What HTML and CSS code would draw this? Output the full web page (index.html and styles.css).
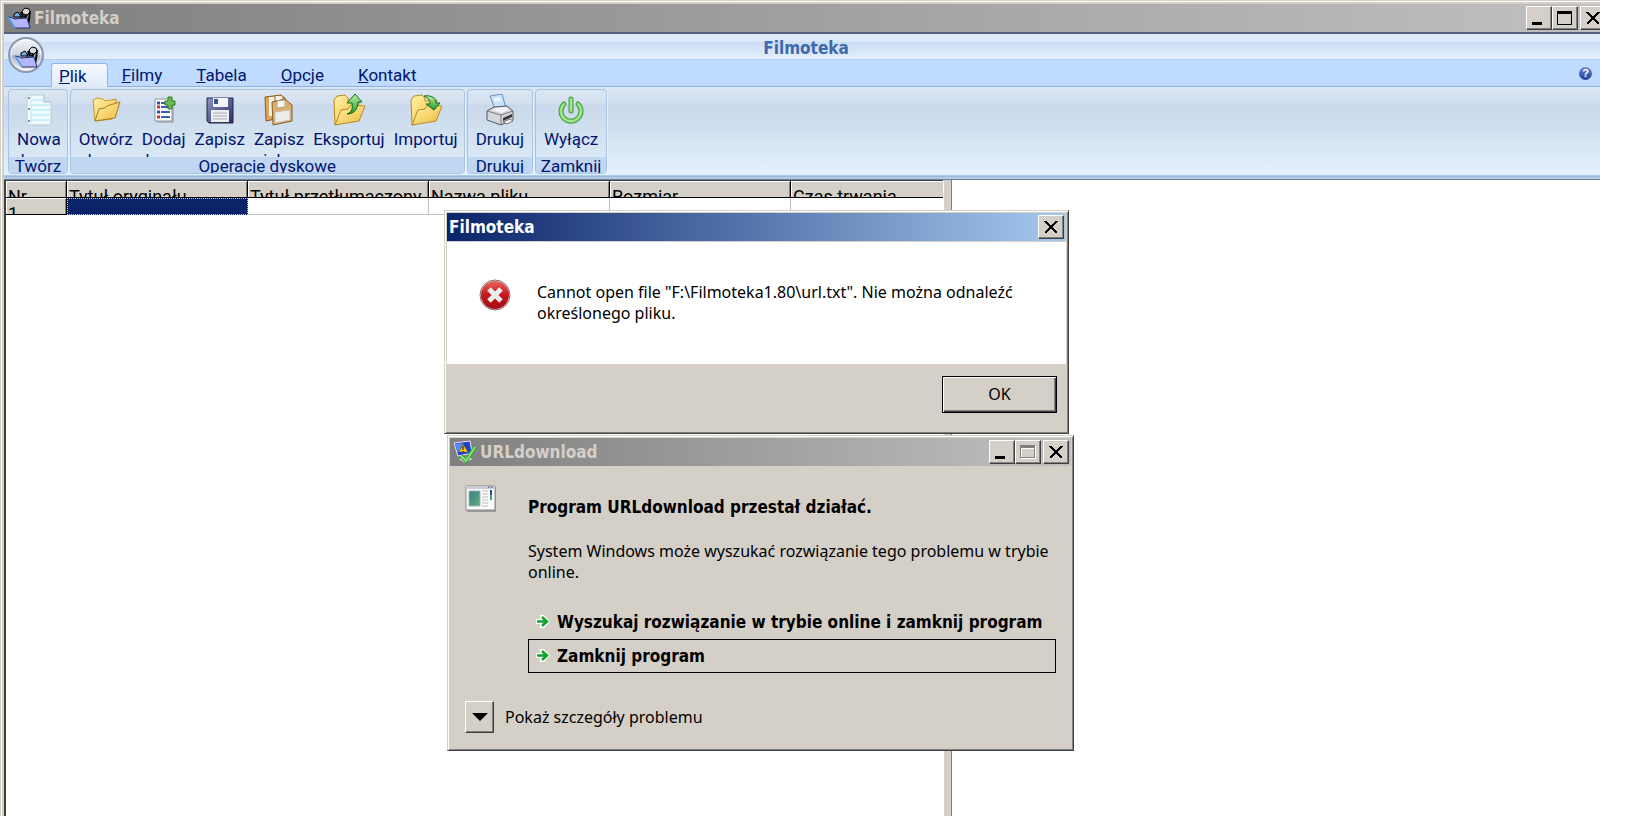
FILE: index.html
```html
<!DOCTYPE html>
<html lang="pl">
<head>
  <meta charset="UTF-8" />
  <title>Filmoteka</title>
  <link rel="stylesheet" href="styles.css">
</head>
<body>
  <!-- Shared shapes -->
  <svg class="defs" width="0" height="0" aria-hidden="true">
    <defs>
      <linearGradient id="folderGrad" x1="0" y1="0" x2="1" y2="1">
        <stop offset="0" stop-color="#fff3a8" /><stop offset="1" stop-color="#efb93c" />
      </linearGradient>
      <linearGradient id="greenGrad" x1="0" y1="0" x2="0" y2="1">
        <stop offset="0" stop-color="#b8f0a0" /><stop offset="1" stop-color="#1e9a2c" />
      </linearGradient>
      <linearGradient id="diskGrad" x1="0" y1="0" x2="1" y2="1">
        <stop offset="0" stop-color="#8d93c4" /><stop offset="1" stop-color="#2b2f5e" />
      </linearGradient>
      <linearGradient id="orbGrad" x1="0" y1="0" x2="0" y2="1">
        <stop offset="0" stop-color="#f4f6fa" /><stop offset="0.5" stop-color="#cdd5e2" />
        <stop offset="0.52" stop-color="#a9b4c9" /><stop offset="1" stop-color="#f2f5fb" />
      </linearGradient>
      <linearGradient id="redGrad" x1="0" y1="0" x2="0" y2="1">
        <stop offset="0" stop-color="#e8685f" /><stop offset="0.5" stop-color="#c4161c" />
        <stop offset="1" stop-color="#a30d12" />
      </linearGradient>
      <linearGradient id="screenGrad" x1="0" y1="0" x2="1" y2="1">
        <stop offset="0" stop-color="#3b7f8c" /><stop offset="1" stop-color="#5fae7b" />
      </linearGradient>
      <symbol id="film" viewBox="0 0 24 22">
        <path d="M7 10V7l4-2 3 5zM13 10l2-5 3 5z" fill="#6fb2ea" stroke="#000" />
        <path d="M14 5l2 5M20 7l-2 4M23 4l-1 9-1 4" fill="none" stroke="#000" stroke-width="2" />
        <path d="M15 4l3-3 4 1 1 3-3 3-4-1z" class="reel" stroke="#000" />
        <path d="M1 10l5 1 1 1 13-1 3 10H8z" fill="#b4b6fb" stroke="#2a2f6e" />
        <path d="M1 10l7 11" stroke="#4aa7e8" stroke-width="1.500" />
      </symbol>
      <symbol id="folderBig" viewBox="0 0 32 32">
        <path d="M1 6l3-4 8-1 3 3v3l12-1-6 20L2 31z" fill="url(#folderGrad)" stroke="#b98a1e" />
        <path d="M2 31l6-15 7-1 3-4 14 1-6 15z" fill="url(#folderGrad)" stroke="#b98a1e" />
      </symbol>
      <symbol id="go" viewBox="0 0 14 14">
        <path d="M0 4h4V0h4l6 6.500L8 13H4V9H0z" fill="#fff" />
        <path d="M1 6.500h10M6 2l5 4.500L6 11" fill="none" stroke="#10a32e" stroke-width="2.500" />
      </symbol>
      <symbol id="cross" viewBox="0 0 14 12">
        <path d="M1 0l12 12M13 0L1 12" stroke="#000" stroke-width="2" shape-rendering="crispEdges" />
      </symbol>
    </defs>
  </svg>

  <main class="app">
    <header class="titlebar inactive">
      <svg class="title-icon" width="24" height="22"><use href="#film" /></svg>
      <h1 class="title-text">Filmoteka</h1>
      <div class="title-buttons">
        <button class="box-btn" aria-label="Minimalizuj"><svg width="16" height="14"><path d="M1 11h10v3H1z" /></svg></button>
        <button class="box-btn" aria-label="Maksymalizuj"><svg width="16" height="14"><path d="M0 0h15v14H0zM1 3v10h13V3z" fill-rule="evenodd" /></svg></button>
        <button class="box-btn close" aria-label="Zamknij"><svg width="14" height="12"><use href="#cross" /></svg></button>
      </div>
    </header>

    <div class="ribbon">
      <div class="ribbon-caption">Filmoteka</div>
      <button class="orb" aria-label="Menu">
        <svg width="38" height="38" viewBox="0 0 38 38">
          <circle cx="19" cy="19" r="17" fill="url(#orbGrad)" stroke="#8b98ae" stroke-width="2" />
          <circle cx="19" cy="19" r="15" fill="none" stroke="#fff" stroke-opacity="0.600" />
          <use href="#film" x="7" y="10" width="24" height="22" />
        </svg>
      </button>
      <nav class="tabs">
        <a class="tab active" href="#plik"><u>P</u>lik</a>
        <a class="tab" href="#filmy"><u>F</u>ilmy</a>
        <a class="tab" href="#tabela"><u>T</u>abela</a>
        <a class="tab" href="#opcje"><u>O</u>pcje</a>
        <a class="tab" href="#kontakt"><u>K</u>ontakt</a>
        <button class="help" aria-label="Pomoc">?</button>
      </nav>

      <div class="panel" id="plik">
        <section class="group">
          <div class="tools">
            <button class="tool">
              <svg width="32" height="32" viewBox="0 0 32 32">
                <path d="M4 1h17l7 7v23H4z" fill="#eefafd" stroke="#b9ccd6" />
                <path d="M21 1v7h7" fill="#d3e6ee" stroke="#a9bcc8" />
                <path d="M8 6h12M8 11h19M8 16h19M8 21h19M8 26h19" stroke="#a5e6f1" />
                <path d="M8 1v30" stroke="#cfe3ea" />
                <path d="M5 4h2M5 15h2M5 27h2" stroke="#7d8f9a" stroke-width="2" />
              </svg>
              <span>Nowa baza</span>
            </button>
          </div>
          <h2 class="group-name">Twórz</h2>
        </section>
        <section class="group">
          <div class="tools">
            <button class="tool">
              <svg width="32" height="32" viewBox="0 0 32 32">
                <path d="M3 6l4-2 6 1 2 2 11-2v7l-4 13-17 2z" fill="url(#folderGrad)" stroke="#c39a2c" />
                <path d="M5 27l4-12 6-1 2-2 13-4-5 16z" fill="url(#folderGrad)" stroke="#a87d1c" />
              </svg>
              <span>Otwórz bazę</span>
            </button>
            <button class="tool">
              <svg width="32" height="32" viewBox="0 0 32 32">
                <path d="M7 5h17v22H7z" fill="#fff" stroke="#8b8fa5" />
                <path d="M24 8l1 1v19H9" fill="none" stroke="#9c8f80" />
                <path d="M9 9h3M9 18h3" stroke="#2b55a8" stroke-width="3" />
                <path d="M9 13h3M9 23h3" stroke="#c0392b" stroke-width="3" />
                <path d="M13 9h5M13 13h9M13 18h9M13 23h9" stroke="#3a5fb0" stroke-width="2" />
                <path d="M17 7h3V3h4v4h3v4h-3v4h-4v-4h-3z" fill="#6dbb4e" stroke="#2f7a2a" />
              </svg>
              <span>Dodaj bazę</span>
            </button>
            <button class="tool">
              <svg width="32" height="32" viewBox="0 0 32 32">
                <path d="M3 4h26v25H5l-2-2z" fill="url(#diskGrad)" stroke="#1f2450" />
                <path d="M9 4h15v9H9z" fill="#f2f4f8" /><path d="M10 5h4v5h-4z" fill="#33588c" />
                <path d="M7 16h18v12H7z" fill="#eceef2" />
                <path d="M9 19h14M9 22h14M9 25h14" stroke="#a7acb8" />
              </svg>
              <span>Zapisz</span>
            </button>
            <button class="tool">
              <svg width="32" height="32" viewBox="0 0 32 32">
                <path d="M2 3l16-2 4 3v19L3 27z" fill="#d9a65c" stroke="#8a5d20" />
                <path d="M6 3h5v19H6zM13 2h6v7h-6z" fill="#f0f0ee" />
                <path d="M9 8l13-3 7 6v16L10 31z" fill="#dcae6c" stroke="#8a5d20" />
                <path d="M14 7l8-1v7l-8 1z" fill="#f5f5f5" stroke="#b5a58c" />
                <path d="M12 18l15-2v10l-15 3z" fill="#ececec" stroke="#c9beac" />
              </svg>
              <span>Zapisz jako</span>
            </button>
            <button class="tool">
              <svg width="32" height="32" viewBox="0 0 32 32">
                <use href="#folderBig" />
                <path d="M14 20c5-2 6-6 5-11h-5l8-9 7 8h-4c0 6-3 12-11 12z" fill="url(#greenGrad)" stroke="#14691f" />
              </svg>
              <span>Eksportuj</span>
            </button>
            <button class="tool">
              <svg width="32" height="32" viewBox="0 0 32 32">
                <use href="#folderBig" />
                <path d="M14 2c8-1 12 2 12 7h4l-6 7-8-6h4c0-4-2-6-6-8z" fill="url(#greenGrad)" stroke="#14691f" />
              </svg>
              <span>Importuj</span>
            </button>
          </div>
          <h2 class="group-name">Operacje dyskowe</h2>
        </section>
        <section class="group single">
          <div class="tools">
            <button class="tool">
              <svg width="32" height="32" viewBox="0 0 32 32">
                <path d="M6 2l12-2 4 14-11 1z" fill="#c5e2fb" stroke="#6f8fb8" />
                <path d="M9 4l7-1 1 4-6 1z" fill="#eaf5ff" />
                <path d="M3 17l7-4 13-1 6 5v9l-12 5L3 26z" fill="#d5d6da" stroke="#55585f" />
                <path d="M3 17l14 4 12-4M17 21v10" fill="none" stroke="#77797f" />
                <path d="M8 16l4-2 10-1 3 3-8 3z" fill="#f3f3f5" />
                <path d="M19 24l9-4v3l-9 4z" fill="#33363c" />
                <path d="M19 28l4 2 6-3-3-2z" fill="#f4f4f4" stroke="#777" />
              </svg>
              <span>Drukuj</span>
            </button>
          </div>
          <h2 class="group-name">Drukuj</h2>
        </section>
        <section class="group single">
          <div class="tools">
            <button class="tool">
              <svg width="32" height="32" viewBox="0 0 32 32" fill="none" stroke-linecap="round">
                <path d="M9 10a10 10 0 1 0 14 0M16 5v12" stroke="#3f9c3c" stroke-width="5" />
                <path d="M9 10a10 10 0 1 0 14 0M16 5v12" stroke="#8edb78" stroke-width="3" />
                <path d="M9 10a10 10 0 1 0 14 0M16 5v12" stroke="#b8eaa6" stroke-width="1" />
              </svg>
              <span>Wyłącz</span>
            </button>
          </div>
          <h2 class="group-name">Zamknij</h2>
        </section>
      </div>
    </div>

    <div class="content">
      <div class="grid-pane">
        <table class="grid">
          <colgroup><col class="col-nr"><col class="col"><col class="col"><col class="col"><col class="col"><col></colgroup>
          <thead>
            <tr>
              <th><div>Nr</div></th>
              <th><div>Tytuł oryginału</div></th>
              <th><div>Tytuł przetłumaczony</div></th>
              <th><div>Nazwa pliku</div></th>
              <th><div>Rozmiar</div></th>
              <th><div>Czas trwania</div></th>
            </tr>
          </thead>
          <tbody>
            <tr>
              <th><div>1</div></th>
              <td class="selected"></td>
              <td></td>
              <td></td>
              <td></td>
              <td></td>
            </tr>
          </tbody>
        </table>
      </div>
      <div class="splitter"></div>
      <div class="preview"></div>
    </div>
  </main>

  <!-- Error message -->
  <section class="window error-window" role="alertdialog" aria-labelledby="errorTitle">
    <header class="titlebar">
      <h2 class="title-text" id="errorTitle">Filmoteka</h2>
      <div class="title-buttons">
        <button class="box-btn close" aria-label="Zamknij"><svg width="14" height="12"><use href="#cross" /></svg></button>
      </div>
    </header>
    <div class="error-body">
      <svg width="32" height="32" viewBox="0 0 32 32">
        <circle cx="16" cy="16" r="15" fill="#f0eded" stroke="#8a6a6a" />
        <circle cx="16" cy="16" r="14" fill="url(#redGrad)" />
        <path d="M10 10l12 12M22 10L10 22" stroke="#ececec" stroke-width="5" />
      </svg>
      <p>Cannot open file "F:\Filmoteka1.80\url.txt". Nie można odnaleźć określonego pliku.</p>
    </div>
    <footer class="error-footer">
      <button class="ok-btn">OK</button>
    </footer>
  </section>

  <!-- Crash report -->
  <section class="window crash-window" role="dialog" aria-labelledby="crashTitle">
    <header class="titlebar inactive">
      <svg class="title-icon" width="24" height="24" viewBox="0 0 24 24">
        <path d="M1 3l16-2 2 12-14 3z" fill="#1c3fd0" stroke="#e8e8f4" />
        <path d="M2 4l8-1-5 10z" fill="#5a8cf5" />
        <path d="M10 4l5 8H6z" fill="#f6c81e" stroke="#7a5a00" stroke-width="0.500" />
        <path d="M10 6v4M10 11v1" stroke="#000" />
        <path d="M6 19l10-3 3 3-7 4z" fill="#e9e9ee" />
        <path d="M8 16l5 5L22 7" fill="none" stroke="#2aa82e" stroke-width="4" />
        <path d="M8 16l5 5L22 7" fill="none" stroke="#8be27a" stroke-width="2" />
      </svg>
      <h2 class="title-text" id="crashTitle">URLdownload</h2>
      <div class="title-buttons">
        <button class="box-btn" aria-label="Minimalizuj"><svg width="16" height="14"><path d="M1 11h10v3H1z" /></svg></button>
        <button class="box-btn" aria-label="Maksymalizuj" disabled>
          <svg width="16" height="14" shape-rendering="crispEdges"><path d="M1 1h15v13H1zM2 4v9h13V4z" fill="#fff" fill-rule="evenodd" /><path d="M0 0h15v13H0zM1 3v9h13V3z" fill="#808080" fill-rule="evenodd" /></svg>
        </button>
        <button class="box-btn close" aria-label="Zamknij"><svg width="14" height="12"><use href="#cross" /></svg></button>
      </div>
    </header>
    <div class="crash-body">
      <svg class="app-icon" width="32" height="28" viewBox="0 0 32 28">
        <path d="M2 2h29v25H2z" fill="#9d9a94" />
        <path d="M1 1h29v24H1z" fill="#fafafa" stroke="#85898f" />
        <path d="M1 1h29v3H1z" fill="#c9ced6" /><path d="M23 2h2M26 2h2" stroke="#556" />
        <path d="M4 6h11v15H4z" fill="url(#screenGrad)" stroke="#9db5b5" />
        <path d="M17 6h6M17 9h6M17 12h6M17 15h6M17 18h6M17 21h6" stroke="#bbb" />
        <path d="M25 5h2v5h-2z" fill="#2d4f8e" /><path d="M25 10h2v5h-2z" fill="#49a867" />
      </svg>
      <div class="crash-text">
        <h3>Program URLdownload przestał działać.</h3>
        <p>System Windows może wyszukać rozwiązanie tego problemu w trybie online.</p>
        <button class="command"><svg width="14" height="14"><use href="#go" /></svg>Wyszukaj rozwiązanie w trybie online i zamknij program</button>
        <button class="command focused"><svg width="14" height="14"><use href="#go" /></svg>Zamknij program</button>
      </div>
    </div>
    <footer class="crash-footer">
      <button class="expand-btn" id="details" aria-labelledby="detailsLabel"><svg width="16" height="8"><path d="M0 0h16L8 8z" /></svg></button>
      <label for="details" id="detailsLabel">Pokaż szczegóły problemu</label>
    </footer>
  </section>
</body>
</html>
```

FILE: styles.css
```css
* {
  box-sizing: border-box;
}
body {
  margin: 0;
  padding-right: 33px;
  height: 100vh;
  overflow: hidden;
  background: #fff;
  color: #000;
  font-family: "Noto Sans", "Open Sans", sans-serif;
  font-size: 16px;
  line-height: 21px;
}
h1, h2, h3, p {
  margin: 0;
}
button {
  margin: 0;
  padding: 0;
  border: 0;
  background: none;
  color: inherit;
  font: inherit;
}
svg {
  flex: none;
  display: block;
}
.defs {
  position: absolute;
}
.title-text,
.ribbon-caption,
.crash-text h3,
.command {
  font-family: "DejaVu Sans Condensed", "DejaVu Sans", sans-serif;
  font-size: 17px;
  font-weight: bold;
}

/* Main window */
.app {
  display: flex;
  flex-direction: column;
  height: 100%;
  padding: 4px 0 0 4px;
  overflow: hidden;
  background: #d4d0c8;
  box-shadow: inset 1px 1px #d4d0c8, inset 2px 2px #fff;
}
.titlebar {
  display: flex;
  align-items: center;
  flex: none;
  height: 28px;
  padding: 0 2px;
  background: linear-gradient(90deg, #0a246a, #a6caf0);
  color: #fff;
}
.titlebar.inactive {
  background: linear-gradient(90deg, #808080, #c0c0c0);
  color: #d4d0c8;
}
.title-icon {
  margin: 0 3px 0 1px;
}
.reel {
  fill: #d8d8d8;
}
.title-buttons {
  display: flex;
  margin-left: auto;
}
.app > .titlebar .title-buttons {
  margin-right: -8px;
}
.box-btn {
  display: flex;
  align-items: center;
  justify-content: center;
  width: 26px;
  height: 24px;
  background: #d4d0c8;
  border: 1px solid;
  border-color: #fff #404040 #404040 #fff;
  box-shadow: inset -1px -1px #808080;
}
.title-buttons .close:not(:first-child) {
  margin-left: 2px;
}

/* Ribbon */
.ribbon {
  position: relative;
  flex: none;
  border-top: 2px solid #54607c;
  color: #00156e;
  font-family: Roboto, "Liberation Sans", sans-serif;
  font-size: 17px;
}
.ribbon-caption {
  height: 26px;
  padding-left: 8px;
  border-bottom: 1px solid #b0cff0;
  background: linear-gradient(#e3ecfa 0, #dbe7f9 8px, #cadcf4 8px, #e4effd 100%);
  color: #3e6aaa;
  line-height: 28px;
  text-align: center;
}
.orb {
  position: absolute;
  left: 3px;
  top: 2px;
}
.tabs {
  display: flex;
  align-items: flex-end;
  gap: 7px;
  height: 27px;
  padding-left: 47px;
  border-bottom: 1px solid #8db2e3;
  background: #bfdbff;
}
.tab {
  height: 23px;
  padding: 0 20px 0 7px;
  color: #00156e;
  line-height: 24px;
  text-decoration: none;
}
.tab.active {
  height: 24px;
  margin-bottom: -1px;
  border: 1px solid #8fb8e8;
  border-bottom: 0;
  border-radius: 3px 3px 0 0;
  background: linear-gradient(#f4f9ff, #dfeafa);
}
.help {
  align-self: center;
  width: 13px;
  height: 13px;
  margin: 0 8px 0 auto;
  border-radius: 50%;
  background: linear-gradient(#6d8bd0, #1c3d9c);
  color: #fff;
  font: bold 11px/13px "Liberation Sans", sans-serif;
}
.panel {
  display: flex;
  gap: 2px;
  height: 93px;
  padding: 2px 4px 5px;
  border-bottom: 1px solid #6a7f9c;
  background: linear-gradient(#dbe6f4 0, #cfddee 17px, #c7d8ea 18px, #e4f0fd 87px, #c9f1ff 88px, #8aa8cc 89px, #b0cae8 90px);
}
.group {
  display: flex;
  flex-direction: column;
  height: 85px;
  overflow: hidden;
  border: 1px solid #a8c4e2;
  border-radius: 4px;
  background: linear-gradient(#dce6f3 0, #d3e0ef 14px, #c9d9eb 15px, #dbe8f5 68px);
  box-shadow: 1px 1px #e8f2fc;
}
.tools {
  display: flex;
  gap: 1px;
  height: 67px;
  padding: 4px 2px 0 4px;
  overflow: hidden;
}
.group.single .tools {
  padding: 4px 4px 0;
}
/* the second line of a long label runs under the group name */
.tool {
  display: flex;
  flex-direction: column;
  align-items: center;
  justify-content: flex-start;
  gap: 3px;
  height: 84px;
  padding: 0 4px;
}
.tool span {
  width: min-content;
  line-height: 21px;
}
.group-name {
  height: 16px;
  overflow: hidden;
  background: #c1d6f0;
  font-size: 17px;
  font-weight: normal;
  line-height: 18px;
  text-align: center;
}

/* Film list */
.content {
  display: flex;
  flex: 1;
  min-height: 0;
}
.grid-pane {
  flex: 0 0 59%;
  margin-right: -3px;
  overflow: hidden;
  border-left: 2px solid #404040;
  background: #fff;
}
.grid {
  width: 100%;
  table-layout: fixed;
  border-collapse: separate;
  border-spacing: 0;
  border-top: 1px solid #404040;
  font-family: Roboto, "Liberation Sans", sans-serif;
  font-size: 18px;
}
.col-nr {
  width: 61px;
}
.col {
  width: 181px;
}
.grid th {
  height: 17px;
  padding: 0;
  border: solid #000;
  border-width: 0 1px 1px 0;
  background: #d4d0c8;
  box-shadow: inset 1px 1px #fff, inset -1px 0 #808080;
  font-weight: normal;
  text-align: left;
}
.grid th:last-child {
  border-right: 0;
}
.grid th div {
  height: 16px;
  padding: 6px 0 0 2px;
  overflow: hidden;
  line-height: 20px;
  white-space: nowrap;
}
.grid td {
  padding: 0;
  border: solid #c0c0c0;
  border-width: 0 1px 1px 0;
}
.grid .selected {
  border: 1px dotted #d4c89a;
  background: #0a246a;
}
.splitter {
  position: relative;
  width: 8px;
  border-left: 1px solid #fff;
  background: #d4d0c8;
}
.preview {
  flex: 1;
  border-left: 1px solid #808080;
  background: #fff;
}

/* Floating windows */
.window {
  position: absolute;
  display: flex;
  flex-direction: column;
  padding: 2px;
  border: 1px solid;
  border-color: #d4d0c8 #404040 #404040 #d4d0c8;
  background: #d4d0c8;
  box-shadow: inset 1px 1px #fff, inset -1px -1px #808080;
}
.window .titlebar {
  margin-bottom: 1px;
}
.error-window {
  left: 444px;
  top: 210px;
  width: 625px;
}
.error-body {
  display: flex;
  gap: 26px;
  min-height: 122px;
  padding: 37px 40px 0 32px;
  background: #fff;
}
.error-body p {
  padding-top: 3px;
}
.error-footer {
  display: flex;
  justify-content: flex-end;
  padding: 12px 9px 18px;
}
.ok-btn {
  width: 115px;
  height: 37px;
  border: 1px solid #000;
  box-shadow: inset 1px 1px #fff, inset -1px -1px #404040, inset -2px -2px #808080;
}
.crash-window {
  left: 447px;
  top: 435px;
  width: 627px;
}
.crash-body {
  display: flex;
  gap: 31px;
  padding: 18px 15px 0;
}
.crash-text {
  flex: 1;
  padding-top: 12px;
}
.crash-text p {
  margin: 23px 0 22px;
}
.command {
  display: flex;
  align-items: center;
  gap: 7px;
  width: 100%;
  height: 34px;
  padding: 0 7px;
  border: 1px solid transparent;
  white-space: nowrap;
}
.command.focused {
  border-color: #000;
}
.crash-footer {
  display: flex;
  align-items: center;
  gap: 11px;
  padding: 28px 15px 15px;
}
.expand-btn {
  display: flex;
  align-items: center;
  justify-content: center;
  width: 29px;
  height: 32px;
  border: 1px solid;
  border-color: #fff #404040 #404040 #fff;
  box-shadow: inset -1px -1px #808080;
}
```
